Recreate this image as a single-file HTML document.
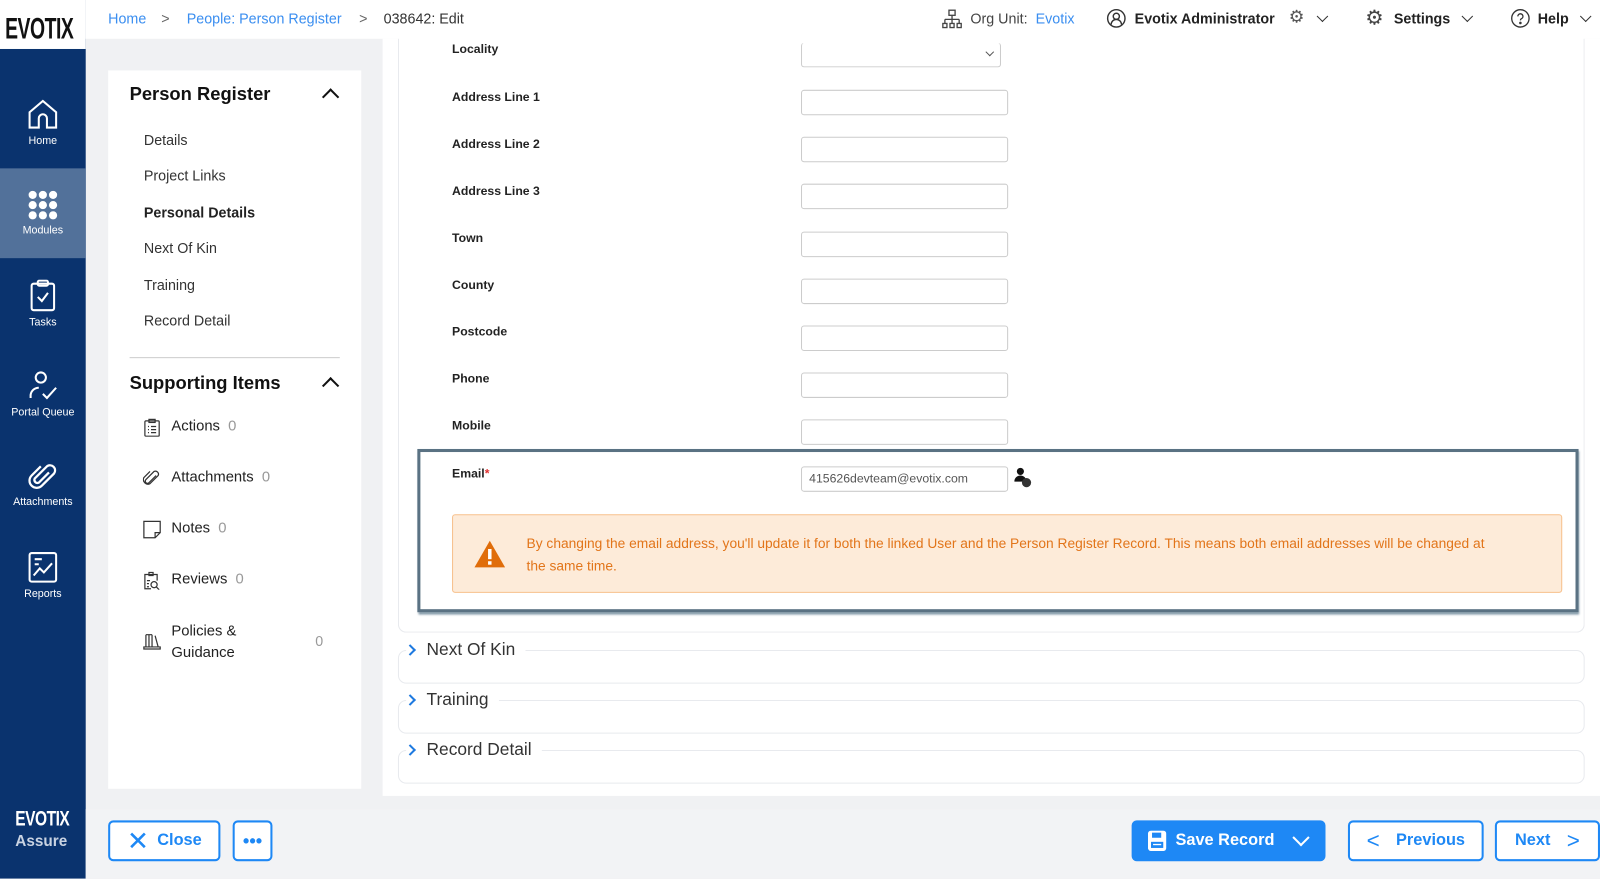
<!DOCTYPE html>
<html><head><meta charset="utf-8"><style>
*{box-sizing:border-box;margin:0;padding:0}
body{width:1600px;height:861px;overflow:hidden;font-family:"Liberation Sans",sans-serif;background:#f0f1f3;position:relative;color:#222}
#wrap{position:absolute;left:0;top:0;width:1568px;height:844px;transform:scale(1.0204);transform-origin:0 0}
.abs{position:absolute}
#side{left:0;top:0;width:84px;height:861px;background:#0a336e}
#logo{left:0;top:0;width:84px;height:48px;background:#fff}
#logo div{position:absolute;left:5px;top:13px;font-weight:bold;font-size:20px;color:#111;letter-spacing:-0.5px;transform:scale(0.95,1.45);transform-origin:0 0}
.nav{position:absolute;left:0;width:84px;height:88px;color:#fff;font-size:10.5px;text-align:center}
.nav svg{display:block;margin:0 auto 4px}
#top{left:84px;top:0;width:1516px;height:38px;background:#fff}
.bc{top:10px;font-size:14px}
#lp{left:106px;top:69px;width:248px;height:704px;background:#fff}
.h{position:absolute;left:21px;font-size:18px;font-weight:bold;color:#111}
.car{position:absolute;left:212px;width:12px;height:12px;border-left:2.5px solid #111;border-top:2.5px solid #111;transform:rotate(45deg)}
.li{position:absolute;left:35px;font-size:14px;color:#333}
.si{position:absolute;left:62px;font-size:14.5px;color:#222}
.si span{color:#999;margin-left:8px}
.sic{position:absolute;left:34px;width:18px;height:18px}
#cp{left:375px;top:38px;width:1193px;height:742px;background:#fff}
.lab{position:absolute;left:443px;font-size:12px;font-weight:bold;color:#222}
.inp{position:absolute;left:785px;width:203px;height:25px;border:1px solid #ccc;border-radius:3px;background:#fff}
.fs{position:absolute;left:390px;width:1163px;border:1px solid #e8eaee;border-radius:8px;background:#fff}
.leg{position:absolute;left:398px;font-size:17px;color:#333;background:#fff;padding:0 10px 0 20px}
.leg i{position:absolute;left:0;top:6px;width:8px;height:8px;border-right:2.5px solid #1e7ae0;border-bottom:2.5px solid #1e7ae0;transform:rotate(-45deg)}
#foot{left:84px;top:793px;width:1516px;height:68px;background:#f2f3f5}
.btn{position:absolute;top:804px;height:40px;border:2px solid #1e88f5;border-radius:5px;color:#1e88f5;font-weight:bold;font-size:16px;display:flex;align-items:center;justify-content:center;background:#fff}
</style></head><body><div id="wrap">
<div class="abs" id="side"></div>
<div class="abs" id="logo"><div>EVOTIX</div></div>
<div class="nav" style="top:96px"><svg width="32" height="32" viewBox="0 0 32 32" fill="none" stroke="#fff" stroke-width="2"><path d="M3 14L16 3l13 11v15H20v-9a4 4 0 0 0-8 0v9H3z"/></svg>Home</div>
<div class="abs" style="left:0;top:165px;width:84px;height:88px;background:#52719a"></div>
<div class="nav" style="top:186px"><svg width="32" height="30" viewBox="0 0 32 30" fill="#fff"><circle cx="6" cy="5" r="4"/><circle cx="16" cy="5" r="4"/><circle cx="26" cy="5" r="4"/><circle cx="6" cy="15" r="4"/><circle cx="16" cy="15" r="4"/><circle cx="26" cy="15" r="4"/><circle cx="6" cy="25" r="4"/><circle cx="16" cy="25" r="4"/><circle cx="26" cy="25" r="4"/></svg>Modules</div>
<div class="nav" style="top:274px"><svg width="26" height="32" viewBox="0 0 26 32" fill="none" stroke="#fff" stroke-width="2"><rect x="2" y="4" width="22" height="26" rx="2"/><rect x="8" y="1" width="10" height="5" rx="1.5"/><path d="M8 17l4 4 6-8"/></svg>Tasks</div>
<div class="nav" style="top:362px"><svg width="32" height="32" viewBox="0 0 32 32" fill="none" stroke="#fff" stroke-width="2"><circle cx="14" cy="8" r="5"/><path d="M4 28v-3a8 8 0 0 1 8-7M16 24l4 4 9-10"/></svg>Portal Queue</div>
<div class="nav" style="top:452px"><svg width="30" height="30" viewBox="0 0 30 30" fill="none" stroke="#fff" stroke-width="2.2"><path d="M21 11L11 21a3 3 0 0 1-4-4L19 5a5 5 0 0 1 7 7L14 24a7 7 0 0 1-10-10l9-9"/></svg>Attachments</div>
<div class="nav" style="top:540px"><svg width="30" height="32" viewBox="0 0 30 32" fill="none" stroke="#fff" stroke-width="2"><rect x="2" y="2" width="26" height="28" rx="2"/><path d="M7 8h7M7 13h4M6 24l6-7 4 4 8-9"/></svg>Reports</div>
<div class="abs" style="left:15px;top:792px;color:#fff;font-weight:bold;font-size:16px;transform:scale(0.95,1.3);transform-origin:0 0;letter-spacing:-0.5px">EVOTIX</div>
<div class="abs" style="left:15px;top:816px;color:#c9d3e2;font-weight:bold;font-size:15px">Assure</div>

<div class="abs" id="lp">
<div class="h" style="top:13px">Person Register</div><div class="car" style="top:20px"></div>
<div class="li" style="top:60px">Details</div>
<div class="li" style="top:95px">Project Links</div>
<div class="li" style="top:131px;font-weight:bold;color:#222">Personal Details</div>
<div class="li" style="top:166px">Next Of Kin</div>
<div class="li" style="top:202px">Training</div>
<div class="li" style="top:237px">Record Detail</div>
<div class="abs" style="left:21px;top:281px;width:206px;height:1px;background:#ccc"></div>
<div class="h" style="top:296px">Supporting Items</div><div class="car" style="top:303px"></div>
<svg class="sic" style="top:341px" viewBox="0 0 18 18" fill="none" stroke="#333" stroke-width="1.2"><rect x="2" y="2.5" width="14" height="15" rx="1"/><rect x="6" y="1" width="6" height="3"/><path d="M5 8h1M8 8h5M5 11h1M8 11h5M5 14h1M8 14h5"/></svg>
<div class="si" style="top:341px">Actions<span>0</span></div>
<svg class="sic" style="top:391px" viewBox="0 0 18 18" fill="none" stroke="#333" stroke-width="1.2"><path d="M13 6l-7 7a2 2 0 0 1-3-3l8-8a3 3 0 0 1 4 4l-8 8a4.5 4.5 0 0 1-6-6l6-6"/></svg>
<div class="si" style="top:391px">Attachments<span>0</span></div>
<svg class="sic" style="top:441px" viewBox="0 0 18 18" fill="none" stroke="#333" stroke-width="1.2"><path d="M1 1h16v11l-5 5H1zM17 12h-5v5"/></svg>
<div class="si" style="top:441px">Notes<span>0</span></div>
<svg class="sic" style="top:491px" viewBox="0 0 18 18" fill="none" stroke="#333" stroke-width="1.2"><path d="M8 17H2V3h12v6M6 1h4v3H6z"/><circle cx="11" cy="13" r="3"/><path d="M13 15l3 3M4 9h3M4 12h2M4 15h2"/></svg>
<div class="si" style="top:491px">Reviews<span>0</span></div>
<svg class="sic" style="top:550px" viewBox="0 0 18 18" fill="none" stroke="#333" stroke-width="1.2"><path d="M3 3v12M6 3v12M9 3v12M12 4l3 11M3 3h6M1 15h16v2H1z"/></svg>
<div class="si" style="top:540px;line-height:21px">Policies &amp;<br>Guidance</div>
<div class="abs" style="left:203px;top:551px;color:#999;font-size:14px">0</div>
</div>

<div class="abs" id="cp"></div>
<div class="fs" style="top:20px;height:600px;border-top:none"></div>
<div class="lab" style="top:41px">Locality</div>
<div class="inp" style="top:42px;width:196px;height:24px;border-top:none"></div>
<div class="abs" style="left:967px;top:48px;width:6px;height:6px;border-right:1.5px solid #555;border-bottom:1.5px solid #555;transform:rotate(45deg)"></div>
<div class="lab" style="top:88px">Address Line 1</div><div class="inp" style="top:88px"></div>
<div class="lab" style="top:134px">Address Line 2</div><div class="inp" style="top:134px"></div>
<div class="lab" style="top:180px">Address Line 3</div><div class="inp" style="top:180px"></div>
<div class="lab" style="top:226px">Town</div><div class="inp" style="top:227px"></div>
<div class="lab" style="top:272px">County</div><div class="inp" style="top:273px"></div>
<div class="lab" style="top:318px">Postcode</div><div class="inp" style="top:319px"></div>
<div class="lab" style="top:364px">Phone</div><div class="inp" style="top:365px"></div>
<div class="lab" style="top:410px">Mobile</div><div class="inp" style="top:411px"></div>
<div class="abs" style="left:409px;top:440px;width:1138px;height:160px;border:3px solid #5a7283;box-shadow:1px 2px 2px #7a93a3;background:#fff"></div>
<div class="lab" style="top:457px">Email<span style="color:#e03030">*</span></div>
<div class="inp" style="top:457px;font-size:12px;color:#555;padding:4px 7px">415626devteam@evotix.com</div>
<svg class="abs" style="left:994px;top:458px" width="20" height="22" viewBox="0 0 20 22"><circle cx="6" cy="4" r="3.5" fill="#111"/><path d="M0 14a6 6 0 0 1 12 0z" fill="#111"/><circle cx="12" cy="15" r="4.5" fill="#333"/></svg>
<div class="abs" style="left:443px;top:504px;width:1088px;height:77px;background:#fdebd9;border:1px solid #f7c08c;border-radius:3px"></div>
<svg class="abs" style="left:464px;top:529px" width="32" height="28" viewBox="0 0 32 28"><path d="M16 1L31 27H1z" fill="#e06d0a"/><rect x="14.3" y="9" width="3.4" height="10" fill="#fff"/><rect x="14.3" y="21" width="3.4" height="3.4" fill="#fff"/></svg>
<div class="abs" style="left:516px;top:522px;width:945px;font-size:13.5px;line-height:22px;color:#e2751a">By changing the email address, you'll update it for both the linked User and the Person Register Record. This means both email addresses will be changed at the same time.</div>
<div class="fs" style="top:637px;height:33px"></div>
<div class="leg" style="top:627px"><i></i>Next Of Kin</div>
<div class="fs" style="top:686px;height:33px"></div>
<div class="leg" style="top:676px"><i></i>Training</div>
<div class="fs" style="top:735px;height:33px"></div>
<div class="leg" style="top:725px"><i></i>Record Detail</div>

<div class="abs" id="top"></div>
<div class="abs bc" style="left:106px;color:#3a8ef0">Home</div>
<div class="abs bc" style="left:158px;color:#666">&gt;</div>
<div class="abs bc" style="left:183px;color:#3a8ef0">People: Person Register</div>
<div class="abs bc" style="left:352px;color:#666">&gt;</div>
<div class="abs bc" style="left:376px;color:#333">038642: Edit</div>
<svg class="abs" style="left:923px;top:9px" width="20" height="20" viewBox="0 0 20 20" fill="none" stroke="#444" stroke-width="1.3"><rect x="7" y="1" width="6" height="5"/><path d="M10 6v4M3 10h14M3 10v4M10 10v4M17 10v4"/><rect x="1" y="14" width="4" height="4"/><rect x="8" y="14" width="4" height="4"/><rect x="15" y="14" width="4" height="4"/></svg>
<div class="abs bc" style="left:951px;color:#444">Org Unit: <span style="color:#3a8ef0;margin-left:4px">Evotix</span></div>
<svg class="abs" style="left:1084px;top:8px" width="20" height="20" viewBox="0 0 20 20" fill="none" stroke="#333" stroke-width="1.4"><circle cx="10" cy="10" r="8.5"/><circle cx="10" cy="8" r="3"/><path d="M5 16a5 5 0 0 1 10 0"/></svg>
<div class="abs bc" style="left:1112px;color:#222;font-weight:bold">Evotix Administrator</div>
<div class="abs" style="left:1263px;top:7px;font-size:17px;color:#555">⚙</div>
<div class="abs" style="left:1292px;top:12px;width:8px;height:8px;border-right:1.5px solid #333;border-bottom:1.5px solid #333;transform:rotate(45deg)"></div>
<div class="abs" style="left:1338px;top:5px;font-size:20px;color:#444">⚙</div>
<div class="abs bc" style="left:1366px;color:#222;font-weight:bold">Settings</div>
<div class="abs" style="left:1434px;top:12px;width:8px;height:8px;border-right:1.5px solid #333;border-bottom:1.5px solid #333;transform:rotate(45deg)"></div>
<svg class="abs" style="left:1480px;top:8px" width="20" height="20" viewBox="0 0 20 20" fill="none" stroke="#333" stroke-width="1.3"><circle cx="10" cy="10" r="8.5"/><path d="M7.5 8a2.5 2.5 0 1 1 3.5 2.3c-.8.4-1 1-1 1.7"/><circle cx="10" cy="14.5" r=".6" fill="#333"/></svg>
<div class="abs bc" style="left:1507px;color:#222;font-weight:bold">Help</div>
<div class="abs" style="left:1550px;top:12px;width:8px;height:8px;border-right:1.5px solid #333;border-bottom:1.5px solid #333;transform:rotate(45deg)"></div>

<div class="abs" id="foot"></div>
<div class="btn" style="left:106px;width:110px"><span style="font-size:26px;font-weight:normal;margin-right:8px">✕</span>Close</div>
<div class="btn" style="left:228px;width:39px;font-size:18px">•••</div>
<div class="btn" style="left:1109px;width:190px;background:#1e88f5;color:#fff;justify-content:flex-start;padding-left:14px">
<svg width="18" height="20" viewBox="0 0 18 20" style="margin-right:9px"><rect x="0" y="0" width="18" height="20" rx="3" fill="#fff"/><rect x="4" y="2" width="9" height="5" fill="#1e88f5"/><rect x="3" y="11" width="12" height="6" fill="#1e88f5"/><rect x="5" y="13" width="8" height="1.3" fill="#fff"/></svg>Save Record
<div style="position:absolute;right:16px;top:9px;width:12px;height:12px;border-right:2.5px solid #fff;border-bottom:2.5px solid #fff;transform:rotate(45deg)"></div></div>
<div class="btn" style="left:1321px;width:133px"><span style="font-size:22px;margin-right:16px;font-weight:normal">&lt;</span>Previous</div>
<div class="btn" style="left:1465px;width:103px">Next<span style="font-size:22px;margin-left:16px;font-weight:normal">&gt;</span></div>
</div></body></html>
